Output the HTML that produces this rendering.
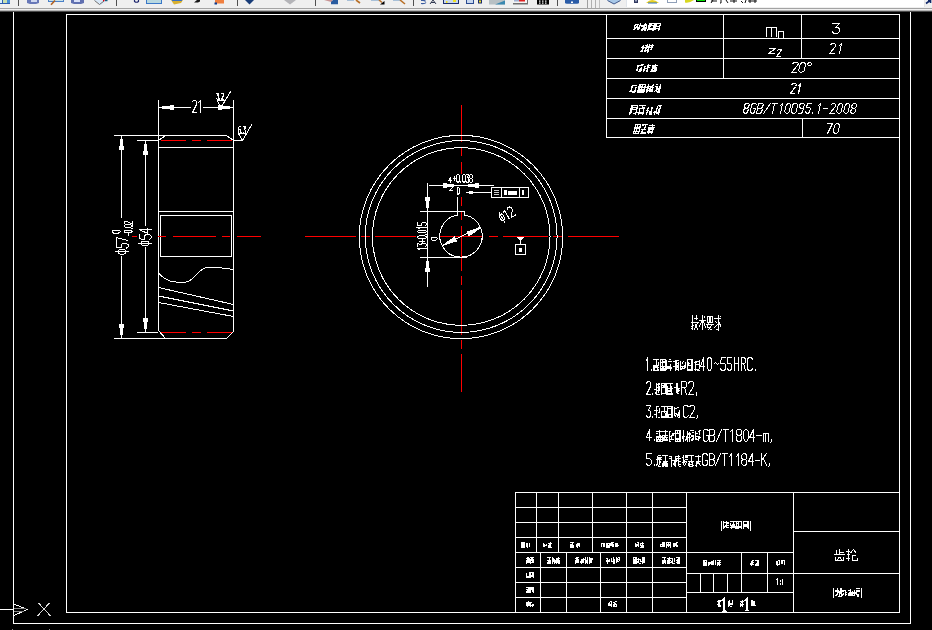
<!DOCTYPE html>
<html><head><meta charset="utf-8"><style>
html,body{margin:0;padding:0;background:#000;width:932px;height:630px;overflow:hidden}
svg{position:absolute;left:0;top:0;display:block}
</style></head><body>
<svg width="932" height="630" viewBox="0 0 932 630">
<rect x="0" y="0" width="932" height="630" fill="#000"/>
<g>
<rect x="0" y="0" width="932" height="8" fill="#efefef"/>
<rect x="626" y="0" width="298" height="7" fill="#fff"/>
<rect x="626" y="0" width="1" height="7" fill="#dfe4ea"/>
<rect x="924" y="0" width="1" height="7" fill="#e4e4e4"/>
<rect x="587" y="0" width="1" height="8" fill="#a0a0a0"/>
<rect x="591" y="0" width="1" height="8" fill="#b0b0b0"/><rect x="595" y="0" width="1" height="8" fill="#b0b0b0"/><rect x="599" y="0" width="1" height="8" fill="#c0c0c0"/>
<rect x="0" y="8" width="932" height="1" fill="#a3a3a3"/>
<rect x="0" y="9" width="932" height="1" fill="#f0f0f0"/>
<rect x="0" y="10" width="932" height="1" fill="#b5b5b5"/>
<rect x="0" y="11" width="932" height="1" fill="#4a4a4a"/>
<g fill="#505050">
<rect x="18" y="0" width="1" height="6"/><rect x="116" y="0" width="1" height="6"/>
<rect x="237" y="0" width="1" height="6"/><rect x="315" y="0" width="1" height="6"/>
<rect x="413" y="0" width="1" height="6"/><rect x="557" y="0" width="1" height="6"/>
</g>
<!-- icons -->
<rect x="0" y="0" width="10" height="4" fill="#2a5cb0"/><rect x="0" y="0" width="2" height="3" fill="#d8f0ff"/><rect x="3" y="0" width="4" height="3" fill="#c8e0b0"/><rect x="7" y="0" width="3" height="3" fill="#4890d8"/>
<path d="M27,0 H39 V3 L36,4 H30 L27,3 Z" fill="#6878b8"/><path d="M31,0 H37 V2 H31Z" fill="#d0d8f0"/>
<rect x="48" y="0" width="16" height="2" fill="#4a80c8"/><rect x="49" y="0" width="14" height="1" fill="#c8e0e8"/>
<path d="M55,0.5 L51,4.8" stroke="#b06020" stroke-width="1.6"/>
<path d="M71,0 H84 V3 L81,4 H74 L71,3 Z" fill="#6070b0"/><path d="M74,0 H80 V2 H74Z" fill="#d8e0f8"/>
<path d="M94,0 H108 L101,5 Z" fill="#d8e8f8"/><path d="M94.5,0.5 L99.5,4.5 L104,1" stroke="#707070" stroke-width="1" fill="none"/>
<rect x="103" y="0" width="1.5" height="1.2" fill="#e00010"/><rect x="105" y="0" width="2.5" height="1.2" fill="#106080"/>
<path d="M134.5,0 V1.5 Q136.5,3 138.5,1.5 V0" stroke="#202870" stroke-width="1.2" fill="none"/>
<rect x="146" y="0" width="16" height="4" fill="#3a78c8"/><rect x="147" y="0" width="14" height="3" fill="#b8d8e0"/>
<path d="M171,0 H183 L181,3 L174,4.5 Z" fill="#d8b030"/><rect x="172" y="0" width="10" height="1" fill="#3a70c0"/>
<path d="M194,2.5 L197,0 H200 V1.5 L198,2.5 Z" fill="#181818"/>
<rect x="215" y="0" width="9" height="3.5" fill="#f08040"/><rect x="214.5" y="2.5" width="2.5" height="2" fill="#0a3a90"/>
<path d="M245,0 H254 L249.5,4.5 Z" fill="#183c78"/>
<path d="M284,0 H296 L290,4.5 Z" fill="#b4b4b8"/>
<path d="M324,0 H332 L333,2.5 Z" fill="#c89494"/><path d="M333,0 H338 V4.2 H331 V2 Z" fill="#2a5ca0"/>
<rect x="347" y="0" width="7" height="1" fill="#a8c0d8"/><path d="M356,0 L360,3" stroke="#b87028" stroke-width="1.6"/>
<rect x="371" y="0" width="8" height="1" fill="#a8c0d8"/><path d="M379,0 L382,2.5" stroke="#b87028" stroke-width="1.6"/><path d="M380,4.5 L384.5,1 V4.5 Z" fill="#000"/>
<rect x="393" y="0" width="7" height="1" fill="#a8c0d8"/><path d="M400,0 L405,4" stroke="#b87028" stroke-width="1.6"/>
<path d="M421,0.5 Q425,0 425.5,1.5 M421,3.5 Q425,4 426,2.5" stroke="#3a5ca0" stroke-width="1.2" fill="none"/>
<path d="M430,4 L433,0 L436,4 M431,2.5 H435" stroke="#303850" stroke-width="1" fill="none"/>
<rect x="443" y="0" width="16" height="4" fill="#1c2c70"/><rect x="444" y="0" width="14" height="3" fill="#c8d8f0"/><rect x="453" y="0" width="3" height="2" fill="#f0e020"/><rect x="446" y="1" width="1.5" height="2" fill="#f0e020"/>
<rect x="466" y="0" width="8" height="4" fill="#2a4a90"/><rect x="467" y="0" width="6" height="3" fill="#c8d8f0"/><rect x="478" y="0" width="4" height="3.5" fill="#1c2c70"/><rect x="479" y="0.5" width="2" height="2" fill="#f0e020"/>
<path d="M489,0 H505 V4.5 H489 Z" fill="#b8c0c4"/><path d="M495,4.5 L505,0.5 V4.5 Z" fill="#3a88b0"/>
<rect x="513" y="0" width="15" height="4.5" fill="#707070"/><rect x="513" y="0" width="14" height="3" fill="#f4f4f4"/><rect x="519" y="0" width="6" height="1.5" fill="#e02020"/><rect x="514" y="0" width="5" height="1.5" fill="#a0b0d0"/>
<rect x="537" y="0" width="12" height="4.5" fill="#000"/><g fill="#fff"><rect x="539" y="0.5" width="1.5" height="1.2"/><rect x="542" y="0.5" width="1.5" height="1.2"/><rect x="545" y="0.5" width="1.5" height="1.2"/><rect x="539" y="2.5" width="1.5" height="1.2"/><rect x="542" y="2.5" width="1.5" height="1.2"/><rect x="545" y="2.5" width="1.5" height="1.2"/></g>
<path d="M565,0 H579 V2.5 Q579,3.8 577,3.8 H567 Q565,3.8 565,2.5 Z" fill="#2a5ca8"/><rect x="571" y="1.5" width="2" height="1.5" fill="#fff"/>
<path d="M607,0 H621 L614,4 Z" fill="#a8c8e8"/><path d="M607.5,0.5 L614,4 L620.5,0.5" stroke="#40588a" stroke-width="1" fill="none"/>
<rect x="634" y="0" width="4" height="3" fill="#303860"/><rect x="635" y="0" width="2" height="1.5" fill="#a0a8c0"/>
<path d="M646,3 Q652,-3 659,3 Z" fill="#e8d020"/><path d="M648,3 H657" stroke="#3070c0" stroke-width="1"/>
<rect x="667.5" y="-1" width="9" height="3.5" fill="none" stroke="#90a0b8" stroke-width="1"/>
<path d="M685,2.5 Q689,3.5 694,0 H685 Z" fill="#d8d820"/>
<rect x="696" y="0" width="10" height="2" fill="#000"/><rect x="697" y="0" width="8" height="1" fill="#00e000"/>
<path d="M711,1 H717 M713,0 L711,3 M721,0 V3 L720,3 M726,0 L728,3 M730,1 H737 M734,0 V3 M741,1 L743,3 M746,0 L745,3 M748,1 H757 M750,0 V3 M755,0 V3" stroke="#101010" stroke-width="1" fill="none"/>
<path d="M926,3.5 L930,0.5 M928,0.5 H930.5 V3" stroke="#10286a" stroke-width="1.6" fill="none"/>
</g>
<g shape-rendering="crispEdges">
<rect x="13" y="12" width="1" height="612" fill="#fff"/>
<rect x="13" y="623" width="898" height="1" fill="#fff"/>
<rect x="910" y="12" width="1" height="612" fill="#fff"/>
<rect x="0" y="609" width="13" height="1" fill="#fff"/>
<rect x="66" y="14" width="1" height="599" fill="#fff"/>
<rect x="66" y="14" width="834" height="1" fill="#fff"/>
<rect x="899" y="14" width="1" height="599" fill="#fff"/>
<rect x="66" y="612" width="834" height="1" fill="#fff"/>
<path d="M14,604 L27,609.5 L14,615.5" stroke="#fff" stroke-width="1" fill="none" />
<path d="M14,608.5 H26 M14,611.5 H24" stroke="#888" stroke-width="1" fill="none" />
<path d="M38.5,603 L50.5,616 M49.5,603 L37.5,616" stroke="#ddd" stroke-width="1" fill="none" />
<rect x="12" y="629" width="1" height="1" fill="#888"/><rect x="49" y="629" width="1" height="1" fill="#888"/>
<rect x="606" y="14" width="294" height="1" fill="#fff"/>
<rect x="606" y="38" width="294" height="1" fill="#fff"/>
<rect x="606" y="58" width="294" height="1" fill="#fff"/>
<rect x="606" y="78" width="294" height="1" fill="#fff"/>
<rect x="606" y="98" width="294" height="1" fill="#fff"/>
<rect x="606" y="118" width="294" height="1" fill="#fff"/>
<rect x="606" y="137" width="294" height="1" fill="#fff"/>
<rect x="606" y="14" width="1" height="124" fill="#fff"/>
<rect x="723" y="14" width="1" height="65" fill="#fff"/>
<rect x="801" y="14" width="1" height="45" fill="#fff"/>
<rect x="802" y="118" width="1" height="20" fill="#fff"/>
<path transform="translate(7.875,0) skewX(-14.036243467926479)" d="M633.5,24V30M633,27.5H636M636,27.5H639M636,28.5H638M637,29.5H639M638.5,23V29M638.5,24V29M633,24.5H637M636.5,25.5L634.5,28.5M642.5,24V31M640,26.5H643M640,25.5H643M640,25.5H643M640.5,30.5L642.5,27.5M643,24.5H645M643,25.5H646M643,28.5H646M644,30.5H646M643.5,23V29M644.5,27V31M643.5,27.5L641.5,30.5M644,29.5H646M645.5,26V29M647,23.5H653M647.5,23V31M652.5,24V31M648,29.5H652M648,25.5H652M648,28.5H652M648.5,24V30M652.5,28V31M649.5,23V27M647.5,27.5L647.5,30.5M653,23.5H659M653.5,23V31M658.5,24V31M654,26.5H658M654,28.5H658M654,26.5H658M654.5,24V30M653.5,25V29" stroke="#fff" stroke-width="1.3" fill="none"/>
<path transform="translate(13.25,0) skewX(-14.036243467926479)" d="M641.5,45V52M640,51.5H643M640,47.5H643M643,45.5H645M643,47.5H645M643,50.5H646M645.5,44V49M644.5,47V52M642.5,48.5L640.5,51.5M642,47.5H645M644,46.5H646M647.5,44V52M646,50.5H648M646,49.5H648M648,45.5H652M648,47.5H651M649,49.5H651M650.5,44V50M647.5,50V53M649,49.5H651" stroke="#fff" stroke-width="1.3" fill="none"/>
<path transform="translate(18.0,0) skewX(-14.036243467926479)" d="M636.5,65V71M636,66.5H638M636,65.5H638M636,66.5H638M636.5,71.5L637.5,68.5M639,64.5H642M638,65.5H641M638,71.5H641M639.5,68V72M640.5,67V71M643.5,66V71M643,68.5H646M643,68.5H646M646,65.5H649M646,67.5H649M646,71.5H648M646.5,64V69M647.5,68.5L646.5,71.5M643.5,67V72M650,65.5H656M653.5,64V67M651,66.5H655M651,70.5H656M651,70.5H656M650,71.5H655M651,68.5H656M651.5,67V72M655.5,67V72M653.5,66.5L650.5,71.5M655.5,69V72M654,69.5H656M654.5,67V70" stroke="#fff" stroke-width="1.3" fill="none"/>
<path transform="translate(23.25,0) skewX(-14.036243467926479)" d="M630.5,85V92M629,90.5H631M629.5,92.5L630.5,89.5M631,85.5H635M631,91.5H635M632,92.5H635M634.5,87V93M633,91.5H636M637,84.5H644M637.5,84V93M643.5,85V93M638,87.5H643M638,91.5H643M638,89.5H643M638,90.5H643M640.5,85V92M637,92.5H644M637,91.5H640M637,86.5H641M638.5,85V90M646.5,84V93M645,87.5H647M645,89.5H647M647,86.5H651M648,89.5H651M647,90.5H651M649.5,87V92M651.5,87V92M651.5,84.5L649.5,87.5M647,88.5H650M655.5,86V91M653,86.5H656M653.5,92.5L655.5,89.5M656,88.5H660M656,89.5H659M656,91.5H659M657,92.5H660M658.5,84V92M654,84.5H656" stroke="#fff" stroke-width="1.4" fill="none"/>
<path transform="translate(28.625,0) skewX(-14.036243467926479)" d="M629,105.5H636M629.5,105V115M635.5,106V115M630,109.5H635M630,107.5H635M630.5,106V114M633,113.5H636M630.5,107V110M637,105.5H644M640.5,105V109M638,108.5H643M637,112.5H643M638,113.5H644M638,112.5H643M638.5,109V115M642.5,109V115M642.5,107V111M640,107.5H642M646.5,107V115M645,110.5H648M645,110.5H648M649,107.5H651M648,111.5H651M649,112.5H652M649,113.5H652M649,114.5H652M650.5,107V114M646.5,108V111M650.5,111.5L648.5,114.5M649,114.5H652M655.5,106V113M653,112.5H656M653,111.5H656M653,112.5H656M653.5,114.5L655.5,111.5M656,105.5H660M657,106.5H659M657,110.5H659M656,112.5H659M657,113.5H659M658.5,106V115M657.5,109V114M656,113.5H659M654.5,111V115" stroke="#fff" stroke-width="1.4" fill="none"/>
<path transform="translate(33.375,0) skewX(-14.036243467926479)" d="M633,124.5H639M633.5,124V134M638.5,125V134M634,131.5H638M634,128.5H638M635.5,125V133M633,133.5H639M633.5,129V132M637.5,126V129M635.5,124V129M640,124.5H646M643.5,124V130M640,129.5H645M640,133.5H646M641,133.5H646M641,132.5H646M641.5,130V134M640,125.5H642M643.5,126V129M647,125.5H653M650.5,124V128M648,127.5H652M648,128.5H653M647,132.5H653M647,132.5H652M647,131.5H652M648.5,128V134M651.5,128V134M650.5,127.5L647.5,133.5M650.5,127.5L652.5,133.5M647,125.5H651M652.5,127V130M647.5,127V132" stroke="#fff" stroke-width="1.3" fill="none"/>
<path  d="M 766.50,36.50 L 766.50,27.50 L 776.50,27.50 L 776.50,36.50 M 771.50,27.50 L 771.50,36.50" stroke="#fff" stroke-width="1.0" fill="none" stroke-linejoin="miter" stroke-linecap="square"/>
<path  d="M 778.50,38.50 L 778.50,31.50 L 783.50,31.50 L 783.50,38.50" stroke="#fff" stroke-width="1.0" fill="none" stroke-linejoin="miter" stroke-linecap="square"/>
<path  d="M 832.50,23.50 L 839.50,23.50 L 835.50,27.50 L 837.50,27.50 L 839.50,28.50 L 839.50,31.50 L 837.50,33.50 L 833.50,33.50 L 832.50,31.50" stroke="#fff" stroke-width="1.0" fill="none" stroke-linejoin="miter" stroke-linecap="square"/>
<path  d="M 769.50,48.50 L 775.50,48.50 L 768.50,53.50 L 774.50,53.50" stroke="#fff" stroke-width="1.0" fill="none" stroke-linejoin="miter" stroke-linecap="square"/>
<path  d="M 777.50,50.50 L 778.50,49.50 L 780.50,49.50 L 781.50,49.50 L 780.50,51.50 L 776.50,56.50 L 780.50,56.50" stroke="#fff" stroke-width="1.0" fill="none" stroke-linejoin="miter" stroke-linecap="square"/>
<path  d="M 830.50,44.50 L 832.50,43.50 L 834.50,43.50 L 835.50,44.50 L 835.50,46.50 L 829.50,53.50 L 834.50,53.50 M 839.50,45.50 L 841.50,43.50 L 839.50,53.50" stroke="#fff" stroke-width="1.0" fill="none" stroke-linejoin="miter" stroke-linecap="square"/>
<path  d="M 792.50,63.50 L 794.50,62.50 L 797.50,62.50 L 798.50,63.50 L 797.50,65.50 L 791.50,72.50 L 796.50,72.50 M 802.50,62.50 L 803.50,62.50 L 805.50,63.50 L 804.50,70.50 L 801.50,72.50 L 800.50,72.50 L 798.50,70.50 L 800.50,63.50 Z M 809.50,62.50 L 810.50,62.50 L 811.50,63.50 L 811.50,64.50 L 810.50,65.50 L 808.50,65.50 L 807.50,64.50 L 807.50,63.50 Z" stroke="#fff" stroke-width="1.0" fill="none" stroke-linejoin="miter" stroke-linecap="square"/>
<path  d="M 791.50,84.50 L 793.50,83.50 L 795.50,83.50 L 796.50,84.50 L 795.50,86.50 L 790.50,93.50 L 794.50,93.50 M 798.50,85.50 L 800.50,83.50 L 798.50,93.50" stroke="#fff" stroke-width="1.3" fill="none" stroke-linejoin="miter" stroke-linecap="square"/>
<path  d="M 746.50,103.50 L 748.50,103.50 L 749.50,104.50 L 748.50,106.50 L 747.50,108.50 L 745.50,108.50 L 743.50,109.50 L 743.50,111.50 L 744.50,113.50 L 746.50,113.50 L 747.50,111.50 L 748.50,109.50 L 747.50,108.50 M 745.50,108.50 L 744.50,106.50 L 744.50,104.50 L 746.50,103.50 M 756.50,104.50 L 755.50,103.50 L 753.50,103.50 L 751.50,104.50 L 750.50,111.50 L 751.50,113.50 L 753.50,113.50 L 754.50,111.50 L 755.50,108.50 L 753.50,108.50 M 758.50,103.50 L 762.50,103.50 L 763.50,104.50 L 762.50,106.50 L 761.50,108.50 L 757.50,108.50 M 761.50,108.50 L 762.50,109.50 L 761.50,111.50 L 760.50,113.50 L 756.50,113.50 L 758.50,103.50 M 763.50,113.50 L 770.50,103.50 M 772.50,103.50 L 777.50,103.50 M 774.50,103.50 L 772.50,113.50 M 780.50,105.50 L 782.50,103.50 L 780.50,113.50 M 788.50,103.50 L 789.50,103.50 L 790.50,104.50 L 789.50,111.50 L 787.50,113.50 L 786.50,113.50 L 784.50,111.50 L 786.50,104.50 Z M 794.50,103.50 L 796.50,103.50 L 797.50,104.50 L 796.50,111.50 L 794.50,113.50 L 792.50,113.50 L 791.50,111.50 L 792.50,104.50 Z M 803.50,108.50 L 800.50,108.50 L 799.50,106.50 L 799.50,104.50 L 801.50,103.50 L 803.50,103.50 L 804.50,104.50 L 802.50,111.50 L 801.50,113.50 L 798.50,113.50 M 811.50,103.50 L 807.50,103.50 L 806.50,107.50 L 809.50,107.50 L 810.50,108.50 L 809.50,111.50 L 808.50,113.50 L 806.50,113.50 L 805.50,111.50 M 812.50,112.50 L 812.50,113.50 M 818.50,105.50 L 820.50,103.50 L 818.50,113.50 M 823.50,108.50 L 827.50,108.50 M 831.50,104.50 L 832.50,103.50 L 834.50,103.50 L 835.50,104.50 L 835.50,106.50 L 829.50,113.50 L 834.50,113.50 M 840.50,103.50 L 841.50,103.50 L 842.50,104.50 L 841.50,111.50 L 839.50,113.50 L 838.50,113.50 L 836.50,111.50 L 838.50,104.50 Z M 847.50,103.50 L 848.50,103.50 L 849.50,104.50 L 848.50,111.50 L 846.50,113.50 L 845.50,113.50 L 843.50,111.50 L 845.50,104.50 Z M 853.50,103.50 L 855.50,103.50 L 856.50,104.50 L 856.50,106.50 L 854.50,108.50 L 852.50,108.50 L 851.50,109.50 L 850.50,111.50 L 851.50,113.50 L 853.50,113.50 L 855.50,111.50 L 855.50,109.50 L 854.50,108.50 M 852.50,108.50 L 851.50,106.50 L 852.50,104.50 L 853.50,103.50" stroke="#fff" stroke-width="1.0" fill="none" stroke-linejoin="miter" stroke-linecap="square"/>
<path  d="M 827.50,123.50 L 832.50,123.50 L 827.50,133.50 M 836.50,123.50 L 838.50,123.50 L 839.50,125.50 L 838.50,131.50 L 836.50,133.50 L 834.50,133.50 L 833.50,131.50 L 834.50,125.50 Z" stroke="#fff" stroke-width="1.0" fill="none" stroke-linejoin="miter" stroke-linecap="square"/>
<rect x="158" y="100" width="1" height="231" fill="#fff"/>
<rect x="233" y="100" width="1" height="231" fill="#fff"/>
<rect x="158" y="107" width="33" height="1" fill="#fff"/>
<rect x="203" y="107" width="31" height="1" fill="#fff"/>
<rect x="162" y="106" width="8" height="3" fill="#fff"/><rect x="170" y="105" width="4" height="5" fill="#fff"/>
<rect x="222" y="106" width="8" height="3" fill="#fff"/><rect x="218" y="105" width="4" height="5" fill="#fff"/>
<rect x="114" y="135" width="113" height="1" fill="#fff"/>
<path d="M226.5,135.5 L233.5,140.5" stroke="#fff" stroke-width="1" fill="none" />
<path d="M158.5,140.5 L165.5,135.5" stroke="#fff" stroke-width="1" fill="none" />
<rect x="137" y="140" width="21" height="1" fill="#fff"/>
<rect x="158" y="147" width="76" height="1" fill="#fff"/>
<rect x="158" y="211" width="76" height="1" fill="#fff"/>
<path d="M160.5,215.5 H231.5 V256.5 H160.5 Z" stroke="#fff" stroke-width="1" fill="none" />
<rect x="114" y="338" width="113" height="1" fill="#fff"/>
<path d="M226.5,338.5 L233.5,331.5" stroke="#fff" stroke-width="1" fill="none" />
<path d="M158.5,330.5 L165.5,338.5" stroke="#fff" stroke-width="1" fill="none" />
<rect x="137" y="332" width="21" height="1" fill="#fff"/>
<rect x="161" y="140" width="25" height="1" fill="#ff0000"/>
<rect x="161" y="332" width="25" height="1" fill="#ff0000"/>
<rect x="192" y="140" width="9" height="1" fill="#ff0000"/>
<rect x="192" y="332" width="9" height="1" fill="#ff0000"/>
<rect x="207" y="140" width="25" height="1" fill="#ff0000"/>
<rect x="207" y="332" width="25" height="1" fill="#ff0000"/>
<rect x="132" y="236" width="5" height="1" fill="#ff0000"/>
<rect x="158" y="236" width="8" height="1" fill="#ff0000"/>
<rect x="173" y="236" width="43" height="1" fill="#ff0000"/>
<rect x="222" y="236" width="8" height="1" fill="#ff0000"/>
<rect x="237" y="236" width="24" height="1" fill="#ff0000"/>
<path d="M158.5,273 C163,278 168,282 176,282 L186,282 C193,282 199,268 207,267.5 L218,267.5 L233.5,269.5" stroke="#fff" stroke-width="1" fill="none" />
<path d="M158.5,287.5 L233.5,304.5 M158.5,296 L233.5,311 M158.5,302.5 L233.5,316.5" stroke="#fff" stroke-width="1" fill="none" />
<rect x="121" y="135" width="1" height="83" fill="#fff"/>
<rect x="121" y="256" width="1" height="83" fill="#fff"/>
<rect x="145" y="140" width="1" height="86" fill="#fff"/>
<rect x="145" y="247" width="1" height="86" fill="#fff"/>
<rect x="120" y="139" width="3" height="7" fill="#fff"/><rect x="119" y="146" width="5" height="4" fill="#fff"/>
<rect x="120" y="328" width="3" height="7" fill="#fff"/><rect x="119" y="324" width="5" height="4" fill="#fff"/>
<rect x="144" y="144" width="3" height="7" fill="#fff"/><rect x="143" y="151" width="5" height="4" fill="#fff"/>
<rect x="144" y="322" width="3" height="7" fill="#fff"/><rect x="143" y="318" width="5" height="4" fill="#fff"/>
<path  d="M 192.50,101.50 L 193.50,100.50 L 195.50,100.50 L 196.50,101.50 L 196.50,104.50 L 192.50,112.50 L 196.50,112.50 M 198.50,102.50 L 200.50,100.50 L 200.50,112.50" stroke="#fff" stroke-width="1.0" fill="none" stroke-linejoin="miter" stroke-linecap="square"/>
<path transform="translate(128,254) rotate(-90)" d="M 2.25,-12.75 L 2.25,0.75 M 1.12,-9.75 L 3.38,-9.75 L 4.50,-8.25 L 4.50,-3.75 L 3.38,-2.25 L 1.12,-2.25 L 0.00,-3.75 L 0.00,-8.25 Z M 10.50,-12.00 L 6.45,-12.00 L 6.00,-6.60 L 9.38,-6.60 L 10.50,-5.10 L 10.50,-1.50 L 9.38,0.00 L 7.12,0.00 L 6.00,-1.50 M 12.00,-12.00 L 16.50,-12.00 L 13.57,0.00" stroke="#fff" stroke-width="1.0" fill="none" stroke-linejoin="miter" stroke-linecap="square"/>
<path transform="translate(151,245.5) rotate(-90)" d="M 2.25,-12.75 L 2.25,0.75 M 1.12,-9.75 L 3.38,-9.75 L 4.50,-8.25 L 4.50,-3.75 L 3.38,-2.25 L 1.12,-2.25 L 0.00,-3.75 L 0.00,-8.25 Z M 10.70,-12.00 L 6.65,-12.00 L 6.20,-6.60 L 9.57,-6.60 L 10.70,-5.10 L 10.70,-1.50 L 9.57,0.00 L 7.33,0.00 L 6.20,-1.50 M 15.78,0.00 L 15.78,-12.00 L 12.40,-3.75 L 16.90,-3.75" stroke="#fff" stroke-width="1.0" fill="none" stroke-linejoin="miter" stroke-linecap="square"/>
<path transform="translate(132,236) rotate(-90)" d="M 0.19,-3.50 L 2.31,-3.50 M 4.34,-8.00 L 4.96,-8.00 L 5.90,-6.50 L 5.90,-1.50 L 4.96,0.00 L 4.34,0.00 L 3.40,-1.50 L 3.40,-6.50 Z M 7.11,-0.60 L 7.11,0.00 M 9.61,-8.00 L 10.23,-8.00 L 11.17,-6.50 L 11.17,-1.50 L 10.23,0.00 L 9.61,0.00 L 8.67,-1.50 L 8.67,-6.50 Z M 12.07,-6.80 L 12.70,-8.00 L 13.95,-8.00 L 14.57,-7.00 L 14.57,-5.00 L 12.07,0.00 L 14.57,0.00" stroke="#fff" stroke-width="1.0" fill="none" stroke-linejoin="miter" stroke-linecap="square"/>
<path transform="translate(120,233) rotate(-90)" d="M 1.12,-8.00 L 1.88,-8.00 L 3.00,-6.50 L 3.00,-1.50 L 1.88,0.00 L 1.12,0.00 L 0.00,-1.50 L 0.00,-6.50 Z" stroke="#fff" stroke-width="1.0" fill="none" stroke-linejoin="miter" stroke-linecap="square"/>
<path d="M217,100.5 H224.5 M217,100.5 L221,107.5 L231,91" stroke="#fff" stroke-width="1" fill="none" />
<path  d="M 216.50,93.50 L 218.50,93.50 L 217.50,95.50 L 218.50,95.50 L 218.50,96.50 L 218.50,98.50 L 218.50,99.50 L 217.50,99.50 L 216.50,98.50 M 219.50,98.50 L 219.50,99.50 M 221.50,93.50 L 221.50,93.50 L 222.50,93.50 L 223.50,93.50 L 223.50,95.50 L 221.50,99.50 L 223.50,99.50" stroke="#fff" stroke-width="1.3" fill="none" stroke-linejoin="miter" stroke-linecap="square"/>
<path d="M233.5,140.5 H242 M238.5,133.5 L242.5,140.5 L252,124 M238.5,133.5 H246.5" stroke="#fff" stroke-width="1" fill="none" />
<path  d="M 240.50,126.50 L 239.50,126.50 L 238.50,127.50 L 238.50,132.50 L 239.50,133.50 L 240.50,133.50 L 240.50,132.50 L 240.50,130.50 L 240.50,129.50 L 238.50,129.50 M 241.50,132.50 L 241.50,133.50 M 243.50,126.50 L 245.50,126.50 L 244.50,129.50 L 244.50,129.50 L 245.50,130.50 L 245.50,132.50 L 244.50,133.50 L 243.50,133.50 L 243.50,132.50" stroke="#fff" stroke-width="1.3" fill="none" stroke-linejoin="miter" stroke-linecap="square"/>
<rect x="305" y="236" width="51" height="1" fill="#ff0000"/>
<rect x="361" y="236" width="9" height="1" fill="#ff0000"/>
<rect x="375" y="236" width="41" height="1" fill="#ff0000"/>
<rect x="439" y="236" width="44" height="1" fill="#ff0000"/>
<rect x="489" y="236" width="9" height="1" fill="#ff0000"/>
<rect x="503" y="236" width="45" height="1" fill="#ff0000"/>
<rect x="553" y="236" width="9" height="1" fill="#ff0000"/>
<rect x="568" y="236" width="51" height="1" fill="#ff0000"/>
<rect x="461" y="105" width="1" height="37" fill="#ff0000"/>
<rect x="461" y="147" width="1" height="9" fill="#ff0000"/>
<rect x="461" y="162" width="1" height="12" fill="#ff0000"/>
<rect x="461" y="197" width="1" height="9" fill="#ff0000"/>
<rect x="461" y="212" width="1" height="8" fill="#ff0000"/>
<rect x="461" y="226" width="1" height="45" fill="#ff0000"/>
<rect x="461" y="276" width="1" height="9" fill="#ff0000"/>
<rect x="461" y="290" width="1" height="45" fill="#ff0000"/>
<rect x="461" y="340" width="1" height="9" fill="#ff0000"/>
<rect x="461" y="354" width="1" height="38" fill="#ff0000"/>
<circle cx="461.0" cy="237.0" r="101.7" stroke="#fff" stroke-width="1" fill="none"/>
<circle cx="461.2" cy="236.5" r="95.9" stroke="#fff" stroke-width="1" fill="none"/>
<circle cx="461.25" cy="236.5" r="88.8" stroke="#fff" stroke-width="1" fill="none"/>
<path d="M457.5,211.5 V215 A21.2,21.2 0 1 0 464.5,215 V211.5" stroke="#fff" stroke-width="1" fill="none" />
<rect x="420" y="211" width="45" height="1" fill="#fff"/>
<rect x="420" y="257" width="47" height="1" fill="#fff"/>
<rect x="427" y="183" width="1" height="104" fill="#fff"/>
<rect x="426" y="201" width="3" height="7" fill="#fff"/><rect x="425" y="197" width="5" height="4" fill="#fff"/>
<rect x="426" y="261" width="3" height="7" fill="#fff"/><rect x="425" y="268" width="5" height="4" fill="#fff"/>
<rect x="457" y="197" width="1" height="18" fill="#fff"/>
<rect x="429" y="185" width="65" height="1" fill="#fff"/>
<rect x="447" y="184" width="7" height="3" fill="#fff"/><rect x="443" y="183" width="4" height="5" fill="#fff"/>
<rect x="468" y="184" width="7" height="3" fill="#fff"/><rect x="475" y="183" width="4" height="5" fill="#fff"/>
<path  d="M 453.50,178.50 L 455.50,178.50 M 454.50,176.50 L 454.50,180.50 M 457.50,174.50 L 458.50,174.50 L 459.50,175.50 L 459.50,180.50 L 458.50,182.50 L 457.50,182.50 L 456.50,180.50 L 456.50,175.50 Z M 460.50,181.50 L 460.50,182.50 M 463.50,174.50 L 464.50,174.50 L 465.50,175.50 L 465.50,180.50 L 464.50,182.50 L 463.50,182.50 L 462.50,180.50 L 462.50,175.50 Z M 466.50,174.50 L 468.50,174.50 L 467.50,177.50 L 468.50,177.50 L 468.50,178.50 L 468.50,181.50 L 468.50,182.50 L 466.50,182.50 L 466.50,181.50 M 470.50,174.50 L 471.50,174.50 L 472.50,175.50 L 472.50,177.50 L 471.50,178.50 L 470.50,178.50 L 469.50,179.50 L 469.50,181.50 L 470.50,182.50 L 471.50,182.50 L 472.50,181.50 L 472.50,179.50 L 471.50,178.50 M 470.50,178.50 L 469.50,177.50 L 469.50,175.50 L 470.50,174.50" stroke="#fff" stroke-width="1.0" fill="none" stroke-linejoin="miter" stroke-linecap="square"/>
<path  d="M 450.50,182.50 L 450.50,177.50 L 448.50,180.50 L 451.50,180.50" stroke="#fff" stroke-width="1.0" fill="none" stroke-linejoin="miter" stroke-linecap="square"/>
<path  d="M 449.50,186.50 L 449.50,186.50 L 451.50,186.50 L 452.50,186.50 L 452.50,187.50 L 449.50,190.50 L 452.50,190.50" stroke="#fff" stroke-width="1.0" fill="none" stroke-linejoin="miter" stroke-linecap="square"/>
<path  d="M 457.50,187.50 L 458.50,187.50 L 459.50,188.50 L 459.50,192.50 L 458.50,194.50 L 457.50,194.50 L 457.50,192.50 L 457.50,188.50 Z" stroke="#fff" stroke-width="1.0" fill="none" stroke-linejoin="miter" stroke-linecap="square"/>
<rect x="466" y="192" width="26" height="1" fill="#fff"/>
<rect x="469" y="191" width="4" height="1" fill="#fff"/>
<rect x="469" y="193" width="4" height="1" fill="#fff"/>
<path d="M443,245.5 L480.5,227" stroke="#fff" stroke-width="1" fill="none" />
<polygon points="481.1772,227.8584 468.8004,236.65380000000002 466.3196,231.6362 480.8228,227.1416" fill="#fff"/>
<polygon points="442.3228,245.1416 454.6996,236.34619999999998 457.1804,241.3638 442.6772,245.8584" fill="#fff"/>
<path transform="translate(426.5,250) rotate(-90)" d="M 0.56,-7.20 L 1.61,-9.00 L 1.61,0.00 M 3.75,-9.00 L 6.55,-9.00 L 5.15,-5.17 L 5.85,-5.17 L 6.55,-3.94 L 6.55,-1.12 L 5.85,0.00 L 4.45,0.00 L 3.75,-1.12 M 7.50,-4.50 L 10.30,-4.50 M 8.90,-6.75 L 8.90,-2.25 M 12.30,-9.00 L 13.00,-9.00 L 14.05,-7.31 L 14.05,-1.69 L 13.00,0.00 L 12.30,0.00 L 11.25,-1.69 L 11.25,-7.31 Z M 15.35,-0.67 L 15.35,0.00 M 18.11,-9.00 L 18.81,-9.00 L 19.86,-7.31 L 19.86,-1.69 L 18.81,0.00 L 18.11,0.00 L 17.06,-1.69 L 17.06,-7.31 Z M 21.37,-7.20 L 22.42,-9.00 L 22.42,0.00 M 27.36,-9.00 L 24.84,-9.00 L 24.56,-4.95 L 26.66,-4.95 L 27.36,-3.83 L 27.36,-1.12 L 26.66,0.00 L 25.26,0.00 L 24.56,-1.12" stroke="#fff" stroke-width="1.0" fill="none" stroke-linejoin="miter" stroke-linecap="square"/>
<path transform="translate(437,240) rotate(-90)" d="M 1.12,-6.00 L 1.88,-6.00 L 3.00,-4.88 L 3.00,-1.12 L 1.88,0.00 L 1.12,0.00 L 0.00,-1.12 L 0.00,-4.88 Z" stroke="#fff" stroke-width="1.0" fill="none" stroke-linejoin="miter" stroke-linecap="square"/>
<path transform="translate(502.5,222.5) rotate(-30)" d="M 2.10,-10.62 L 2.10,0.62 M 1.05,-8.12 L 3.15,-8.12 L 4.20,-6.88 L 4.20,-3.12 L 3.15,-1.88 L 1.05,-1.88 L 0.00,-3.12 L 0.00,-6.88 Z M 6.14,-8.00 L 7.71,-10.00 L 7.71,0.00 M 10.60,-8.50 L 11.65,-10.00 L 13.75,-10.00 L 14.80,-8.75 L 14.80,-6.25 L 10.60,0.00 L 14.80,0.00" stroke="#fff" stroke-width="1.0" fill="none" stroke-linejoin="miter" stroke-linecap="square"/>
<path d="M491.5,187.5 H528.5 V197.5 H491.5 Z M501.5,187.5 V197.5 M519.5,187.5 V197.5" stroke="#fff" stroke-width="1" fill="none" />
<path d="M494,190.5 H499 M494,192.5 H499 M494,194.5 H499" stroke="#ccc" stroke-width="1" fill="none" />
<rect x="504" y="190" width="3" height="5" fill="#fff"/><rect x="508" y="191" width="9" height="4" fill="#fff"/><rect x="522" y="190" width="2" height="5" fill="#fff"/>
<polygon points="516.5,236.5 524.5,236.5 520.5,241" fill="#fff"/>
<rect x="520" y="241" width="1" height="4" fill="#fff"/>
<path d="M515.5,244.5 H525.5 V254.5 H515.5 Z" stroke="#fff" stroke-width="1" fill="none" />
<rect x="519" y="248" width="3" height="4" fill="#fff"/>
<path d="M691,322.5 H695 M692.5,315 V329 L691,328 M691,327 L694,325 M696.5,315 V320 M694,318.5 H698 M694,322.5 H698 L694,330 M695,324 L698,330" stroke="#fff" stroke-width="1" fill="none" />
<path d="M699,320.5 H706 M702.5,315 V330 M702,321 L699,327 M703,321 L706,328 M704,316.5 L705,317.5" stroke="#fff" stroke-width="1" fill="none" />
<path d="M707,316.5 H713 M707.5,317 V322 H712.5 V317 M709.5,316 V322 M710.5,316 V322 M706,324.5 H714 M709,323 L707,327 L712,330 M712,325 L708,330" stroke="#fff" stroke-width="1" fill="none" />
<path d="M714,318.5 H721 M718.5,315 V330 L716,329 M715,321 L717,323 M714,328 L718,324 M719,322 L721,327 M720,316 L721,317" stroke="#fff" stroke-width="1" fill="none" />
<path  d="M 646.50,360.50 L 647.50,357.50 L 647.50,370.50" stroke="#fff" stroke-width="1.0" fill="none" stroke-linejoin="miter" stroke-linecap="square"/>
<path  d="M 651.50,369.50 L 651.50,370.50" stroke="#fff" stroke-width="1.0" fill="none" stroke-linejoin="miter" stroke-linecap="square"/>
<path  d="M653,359.5H659M656.5,359V366M653,365.5H658M653,370.5H658M653,370.5H659M654,367.5H659M653,366.5H658M653.5,366V371M657.5,366V371M656.5,365.5L653.5,370.5M656.5,365.5L658.5,370.5M658.5,362V366M660,359.5H666M660.5,359V371M665.5,360V371M661,366.5H665M661,368.5H665M661,362.5H665M661,369.5H665M662.5,360V370M660,370.5H666M663,361.5H666M663.5,367V370M666.5,360V370M666,367.5H668M666.5,370.5L667.5,367.5M669,359.5H671M668,361.5H672M668,367.5H672M668,368.5H672M670.5,364V371M666,367.5H670M667,366.5H670M667,368.5H669M675.5,360V371M673,366.5H676M673,361.5H676M676,360.5H679M676,366.5H679M676,369.5H679M676.5,361V369M678.5,362V371M677.5,365.5L676.5,370.5M676,363.5H679M675.5,361V364M680.5,361V370M680,368.5H683M680,366.5H683M680,366.5H683M680.5,370.5L682.5,367.5M683,366.5H686M683,368.5H685M685.5,362V368M684.5,365V368M683.5,361.5L681.5,364.5M680,369.5H682M687,359.5H693M687.5,359V371M692.5,360V371M688,369.5H692M688,365.5H692M691.5,360V370M687,370.5H693M688.5,363.5L687.5,366.5M688,363.5H690M688.5,362.5L687.5,365.5M695.5,361V371M694,362.5H696M696,361.5H699M696,364.5H700M697,370.5H700M699.5,360V369M694,369.5H696M695,369.5H699M696.5,362.5L694.5,365.5" stroke="#fff" stroke-width="1.0" fill="none"/>
<path  d="M 703.50,370.50 L 703.50,357.50 L 700.50,366.50 L 704.50,366.50 M 708.50,357.50 L 710.50,357.50 L 711.50,359.50 L 711.50,367.50 L 710.50,370.50 L 708.50,370.50 L 707.50,367.50 L 707.50,359.50 Z M 714.50,363.50 L 715.50,362.50 L 717.50,364.50 L 718.50,363.50 M 725.50,357.50 L 721.50,357.50 L 720.50,363.50 L 724.50,363.50 L 725.50,364.50 L 725.50,368.50 L 724.50,370.50 L 721.50,370.50 L 720.50,368.50 M 731.50,357.50 L 727.50,357.50 L 727.50,363.50 L 730.50,363.50 L 731.50,364.50 L 731.50,368.50 L 730.50,370.50 L 728.50,370.50 L 727.50,368.50 M 734.50,357.50 L 734.50,370.50 M 738.50,357.50 L 738.50,370.50 M 734.50,363.50 L 738.50,363.50 M 741.50,370.50 L 741.50,357.50 L 744.50,357.50 L 745.50,359.50 L 745.50,362.50 L 744.50,363.50 L 741.50,363.50 M 743.50,363.50 L 745.50,370.50 M 752.50,359.50 L 751.50,357.50 L 748.50,357.50 L 747.50,359.50 L 747.50,368.50 L 748.50,370.50 L 751.50,370.50 L 752.50,368.50 M 755.50,369.50 L 755.50,370.50" stroke="#fff" stroke-width="1.0" fill="none" stroke-linejoin="miter" stroke-linecap="square"/>
<path  d="M 646.50,383.50 L 647.50,381.50 L 649.50,381.50 L 650.50,382.50 L 650.50,386.50 L 646.50,394.50 L 650.50,394.50 M 652.50,393.50 L 652.50,394.50" stroke="#fff" stroke-width="1.0" fill="none" stroke-linejoin="miter" stroke-linecap="square"/>
<path  d="M656.5,383V395M654,389.5H657M654.5,394.5L656.5,391.5M658,383.5H660M657,387.5H660M657,394.5H660M658.5,385V393M657,384.5H660M659.5,386V391M657,390.5H659M661,383.5H667M661.5,383V395M666.5,384V395M662,385.5H666M662,393.5H666M662,387.5H666M665.5,384V394M664.5,384.5L662.5,387.5M663,387.5H667M665.5,384.5L663.5,387.5M667,383.5H673M670.5,383V389M667,388.5H673M667,390.5H672M668,393.5H672M668,394.5H673M668,391.5H672M667.5,389V395M670.5,388.5L672.5,394.5M667.5,385.5L667.5,388.5M671.5,386V391M670.5,384V387M676.5,383V393M674,387.5H677M677,388.5H680M678,390.5H680M677,393.5H679M677.5,383V392M678.5,389.5L677.5,394.5M676,392.5H678" stroke="#fff" stroke-width="1.0" fill="none"/>
<path  d="M 681.50,394.50 L 681.50,381.50 L 685.50,381.50 L 686.50,382.50 L 686.50,386.50 L 685.50,387.50 L 681.50,387.50 M 684.50,387.50 L 686.50,394.50 M 688.50,383.50 L 689.50,381.50 L 692.50,381.50 L 693.50,382.50 L 693.50,386.50 L 688.50,394.50 L 693.50,394.50 M 696.50,392.50 L 696.50,394.50 L 696.50,395.50" stroke="#fff" stroke-width="1.0" fill="none" stroke-linejoin="miter" stroke-linecap="square"/>
<path  d="M 646.50,405.50 L 650.50,405.50 L 648.50,410.50 L 649.50,410.50 L 650.50,411.50 L 650.50,415.50 L 649.50,417.50 L 647.50,417.50 L 646.50,415.50 M 652.50,416.50 L 652.50,417.50" stroke="#fff" stroke-width="1.0" fill="none" stroke-linejoin="miter" stroke-linecap="square"/>
<path  d="M656.5,406V418M654,410.5H657M654,414.5H657M657,406.5H659M658,412.5H660M658,417.5H660M659.5,408V413M656.5,408V412M656,410.5H658M661,406.5H667M664.5,406V412M661,411.5H667M662,417.5H666M662,416.5H667M661.5,412V418M666.5,412V418M664.5,411.5L666.5,417.5M663,416.5H665M662,406.5H664M661,406.5H663M667,406.5H673M667.5,406V418M672.5,407V418M668,408.5H672M668,414.5H672M668,414.5H672M671.5,407V417M667,417.5H673M669.5,414.5L667.5,417.5M671,416.5H673M671.5,409V412M674.5,407V416M674,413.5H677M674,413.5H677M674,408.5H677M674.5,417.5L676.5,414.5M677,407.5H679M678,414.5H680M677,415.5H679M678,417.5H680M679.5,410V417M679.5,410V414M678.5,412.5L677.5,417.5M677.5,414V417" stroke="#fff" stroke-width="1.0" fill="none"/>
<path  d="M 688.50,406.50 L 686.50,405.50 L 684.50,405.50 L 683.50,406.50 L 683.50,415.50 L 684.50,417.50 L 686.50,417.50 L 688.50,415.50 M 689.50,406.50 L 691.50,405.50 L 693.50,405.50 L 694.50,406.50 L 694.50,409.50 L 689.50,417.50 L 694.50,417.50 M 697.50,415.50 L 697.50,417.50 L 696.50,418.50" stroke="#fff" stroke-width="1.0" fill="none" stroke-linejoin="miter" stroke-linecap="square"/>
<path  d="M 649.50,440.50 L 649.50,429.50 L 646.50,437.50 L 651.50,437.50 M 654.50,439.50 L 654.50,440.50" stroke="#fff" stroke-width="1.0" fill="none" stroke-linejoin="miter" stroke-linecap="square"/>
<path  d="M656,431.5H662M659.5,430V437M656,436.5H662M656,439.5H661M656,439.5H662M657,437.5H662M657,441.5H662M656.5,437V442M660.5,437V442M659.5,436.5L656.5,441.5M656,433.5H658M660.5,435.5L658.5,438.5M659,440.5H661M662,431.5H668M665.5,430V436M662,435.5H668M663,440.5H667M663,439.5H668M662,437.5H668M662.5,436V442M665.5,435.5L662.5,441.5M665.5,435.5L667.5,441.5M662.5,437V440M669.5,432V442M669,436.5H671M669,431.5H671M669,439.5H671M672,433.5H675M672,434.5H674M672,435.5H674M671.5,435V439M669,441.5H671M671,435.5H674M670,439.5H674M675,430.5H681M675.5,430V442M680.5,431V442M676,433.5H680M676,438.5H680M676,439.5H680M676,433.5H680M679.5,431V441M675,441.5H681M677.5,431V434M677.5,438V441M679.5,438V442M683.5,430V442M682,436.5H685M686,439.5H688M687.5,431V442M686.5,436.5L685.5,441.5M682.5,435.5L682.5,438.5M689.5,432V442M688,433.5H691M688,437.5H691M688,434.5H691M692,432.5H694M691,435.5H694M692,438.5H694M691,439.5H694M691,440.5H693M693.5,435V438M690,430.5H694M691,436.5H694M695.5,431V440M695,436.5H698M695,433.5H698M695,439.5H698M699,430.5H701M698,431.5H700M698,437.5H701M698.5,436V440M699.5,436.5L698.5,441.5M695,438.5H697M699.5,432V435" stroke="#fff" stroke-width="1.0" fill="none"/>
<path  d="M 708.50,430.50 L 706.50,429.50 L 704.50,429.50 L 703.50,430.50 L 703.50,439.50 L 704.50,441.50 L 706.50,441.50 L 708.50,439.50 L 708.50,435.50 L 706.50,435.50 M 709.50,429.50 L 713.50,429.50 L 714.50,430.50 L 714.50,433.50 L 713.50,435.50 L 709.50,435.50 M 713.50,435.50 L 714.50,436.50 L 714.50,439.50 L 713.50,441.50 L 709.50,441.50 L 709.50,429.50 M 716.50,441.50 L 721.50,429.50 M 723.50,429.50 L 728.50,429.50 M 725.50,429.50 L 725.50,441.50 M 730.50,431.50 L 732.50,429.50 L 732.50,441.50 M 737.50,429.50 L 740.50,429.50 L 741.50,430.50 L 741.50,433.50 L 740.50,435.50 L 737.50,435.50 L 736.50,436.50 L 736.50,439.50 L 737.50,441.50 L 740.50,441.50 L 741.50,439.50 L 741.50,436.50 L 740.50,435.50 M 737.50,435.50 L 736.50,433.50 L 736.50,430.50 L 737.50,429.50 M 745.50,429.50 L 746.50,429.50 L 748.50,431.50 L 748.50,438.50 L 746.50,441.50 L 745.50,441.50 L 743.50,438.50 L 743.50,431.50 Z M 753.50,441.50 L 753.50,429.50 L 749.50,437.50 L 754.50,437.50 M 756.50,435.50 L 761.50,435.50 M 763.50,441.50 L 763.50,433.50 L 768.50,433.50 L 768.50,441.50 M 765.50,433.50 L 765.50,441.50 M 771.50,439.50 L 771.50,441.50 L 770.50,442.50" stroke="#fff" stroke-width="1.0" fill="none" stroke-linejoin="miter" stroke-linecap="square"/>
<path  d="M 651.50,453.50 L 646.50,453.50 L 646.50,458.50 L 649.50,458.50 L 651.50,460.50 L 651.50,463.50 L 649.50,465.50 L 647.50,465.50 L 646.50,463.50 M 654.50,464.50 L 654.50,465.50" stroke="#fff" stroke-width="1.0" fill="none" stroke-linejoin="miter" stroke-linecap="square"/>
<path  d="M657.5,456V465M656,464.5H658M656,459.5H658M656.5,466.5L657.5,463.5M658,455.5H661M658,457.5H662M658,458.5H661M658,459.5H662M658,466.5H661M659.5,460V465M660.5,461.5L658.5,466.5M657,457.5H659M658.5,458.5L656.5,461.5M662,455.5H668M665.5,455V462M663,461.5H668M663,464.5H668M663,465.5H668M662,463.5H668M663,462.5H667M663.5,462V467M665.5,461.5L667.5,466.5M665,466.5H668M665,455.5H668M662.5,463V467M671.5,456V467M669,458.5H672M669,456.5H672M672,460.5H675M673,463.5H675M674.5,461V466M674.5,461V466M673,464.5H675M675.5,456V467M675,458.5H678M675,460.5H678M678,456.5H680M678,461.5H681M679,464.5H681M679,466.5H681M678.5,455V464M678.5,455V466M675,456.5H679M676.5,459V462M677,458.5H681M683.5,455V465M682,457.5H684M682,462.5H684M685,455.5H688M685,456.5H688M685,457.5H688M685,459.5H688M684.5,460V463M686.5,461.5L684.5,466.5M683,461.5H687M688,455.5H694M691.5,455V462M688,461.5H693M689,464.5H693M689,466.5H693M688,464.5H693M689.5,462V467M692.5,462V467M691.5,461.5L693.5,466.5M688.5,463V466M690,466.5H693M691,461.5H694M695,456.5H701M698.5,455V462M696,461.5H701M696,463.5H700M696,463.5H700M696.5,462V467M698.5,461.5L695.5,466.5M698.5,461.5L700.5,466.5M698.5,460.5L696.5,463.5" stroke="#fff" stroke-width="1.0" fill="none"/>
<path  d="M 707.50,455.50 L 706.50,453.50 L 703.50,453.50 L 702.50,455.50 L 702.50,463.50 L 703.50,465.50 L 706.50,465.50 L 707.50,463.50 L 707.50,460.50 L 705.50,460.50 M 709.50,453.50 L 712.50,453.50 L 714.50,455.50 L 714.50,458.50 L 712.50,459.50 L 709.50,459.50 M 712.50,459.50 L 714.50,460.50 L 714.50,463.50 L 712.50,465.50 L 709.50,465.50 L 709.50,453.50 M 715.50,465.50 L 720.50,453.50 M 722.50,453.50 L 727.50,453.50 M 724.50,453.50 L 724.50,465.50 M 729.50,456.50 L 731.50,453.50 L 731.50,465.50 M 736.50,456.50 L 738.50,453.50 L 738.50,465.50 M 743.50,453.50 L 745.50,453.50 L 746.50,455.50 L 746.50,458.50 L 745.50,459.50 L 743.50,459.50 L 741.50,460.50 L 741.50,463.50 L 743.50,465.50 L 745.50,465.50 L 746.50,463.50 L 746.50,460.50 L 745.50,459.50 M 743.50,459.50 L 741.50,458.50 L 741.50,455.50 L 743.50,453.50 M 752.50,465.50 L 752.50,453.50 L 748.50,461.50 L 753.50,461.50 M 755.50,460.50 L 759.50,460.50 M 761.50,453.50 L 761.50,465.50 M 766.50,453.50 L 761.50,460.50 M 763.50,458.50 L 766.50,465.50 M 769.50,463.50 L 769.50,465.50 L 768.50,466.50" stroke="#fff" stroke-width="1.0" fill="none" stroke-linejoin="miter" stroke-linecap="square"/>
<rect x="515" y="492" width="172" height="1" fill="#fff"/>
<rect x="515" y="507" width="172" height="1" fill="#fff"/>
<rect x="515" y="522" width="172" height="1" fill="#fff"/>
<rect x="515" y="537" width="172" height="1" fill="#fff"/>
<rect x="515" y="552" width="172" height="1" fill="#fff"/>
<rect x="515" y="567" width="172" height="1" fill="#fff"/>
<rect x="515" y="582" width="172" height="1" fill="#fff"/>
<rect x="515" y="597" width="172" height="1" fill="#fff"/>
<rect x="515" y="612" width="172" height="1" fill="#fff"/>
<rect x="515" y="492" width="1" height="61" fill="#fff"/>
<rect x="536" y="492" width="1" height="61" fill="#fff"/>
<rect x="558" y="492" width="1" height="61" fill="#fff"/>
<rect x="592" y="492" width="1" height="61" fill="#fff"/>
<rect x="626" y="492" width="1" height="61" fill="#fff"/>
<rect x="652" y="492" width="1" height="61" fill="#fff"/>
<rect x="515" y="552" width="1" height="61" fill="#fff"/>
<rect x="540" y="552" width="1" height="61" fill="#fff"/>
<rect x="566" y="552" width="1" height="61" fill="#fff"/>
<rect x="600" y="552" width="1" height="61" fill="#fff"/>
<rect x="626" y="552" width="1" height="61" fill="#fff"/>
<rect x="652" y="552" width="1" height="61" fill="#fff"/>
<rect x="686" y="492" width="1" height="121" fill="#fff"/>
<rect x="686" y="492" width="214" height="1" fill="#fff"/>
<rect x="793" y="492" width="1" height="121" fill="#fff"/>
<rect x="793" y="531" width="107" height="1" fill="#fff"/>
<rect x="686" y="573" width="214" height="1" fill="#fff"/>
<rect x="686" y="552" width="108" height="1" fill="#fff"/>
<rect x="686" y="592" width="108" height="1" fill="#fff"/>
<rect x="741" y="552" width="1" height="41" fill="#fff"/>
<rect x="767" y="552" width="1" height="41" fill="#fff"/>
<rect x="700" y="573" width="1" height="20" fill="#fff"/>
<rect x="713" y="573" width="1" height="20" fill="#fff"/>
<rect x="727" y="573" width="1" height="20" fill="#fff"/>
<path  d="M521,542.5H525M521.5,542V548M524.5,543V548M522,544.5H524M522,546.5H524M522.5,543V547M521,547.5H525M523.5,542V547M523.5,544V548M524.5,543V546M527.5,544V548M526,543.5H528M526,545.5H528M529.5,543V547M526.5,543.5L526.5,546.5" stroke="#fff" stroke-width="1.6" fill="none"/>
<path  d="M543.5,543V547M543,544.5H545M543,546.5H545M545.5,545V546M546.5,544V546M543,544.5H545M544.5,544V547M548,543.5H552M550.5,542V547M548,546.5H551M548,547.5H552M548,547.5H551M549,547.5H551M548,547.5H552M548.5,547V548M550.5,547V548M550.5,546.5L548.5,547.5M550.5,542V547M550.5,543.5L548.5,546.5" stroke="#fff" stroke-width="1.6" fill="none"/>
<path  d="M570,542.5H574M572.5,542V546M570,545.5H574M570,546.5H574M571,547.5H574M570.5,546V548M572.5,546V548M572.5,545.5L573.5,547.5M570,544.5H573M577.5,543V548M576,544.5H578M576,546.5H578M576.5,547.5L577.5,544.5M578,543.5H580M578,544.5H580M579.5,545V547M576,545.5H579" stroke="#fff" stroke-width="1.6" fill="none"/>
<path  d="M601.5,544V547M601,543.5H603M603,544.5H605M603,546.5H605M603.5,544V546M603.5,543V547M604.5,543V546M603,543.5H605M606.5,543V548M606,543.5H608M606,546.5H608M606,545.5H608M606.5,547.5L607.5,544.5M608,543.5H610M609.5,544V546M608.5,545V548M609.5,545.5L608.5,547.5M606,547.5H610M611.5,542V546M610,544.5H612M612,542.5H614M612,545.5H614M612,546.5H614M612.5,543V547M612,544.5H614M610.5,542.5L610.5,545.5M615.5,544V547M615,546.5H617M615,543.5H617M617,545.5H619M617.5,543V547M616.5,543.5L615.5,546.5" stroke="#fff" stroke-width="1.6" fill="none"/>
<path  d="M635.5,543V546M635,544.5H637M635,546.5H637M635.5,547.5L636.5,544.5M637,542.5H639M637.5,544V546M638.5,543V547M637,544.5H639M640,543.5H644M642.5,542V547M641,546.5H643M640,547.5H644M641,547.5H644M640,547.5H644M641,547.5H644M640.5,547V548M643.5,547V548M642.5,546.5L640.5,547.5M642.5,546.5L643.5,547.5M640.5,542.5L640.5,545.5M640,545.5H644" stroke="#fff" stroke-width="1.6" fill="none"/>
<path  d="M660.5,544V546M660,544.5H662M660,546.5H662M660,544.5H662M662,542.5H665M662,544.5H665M662,546.5H665M664.5,545V546M662.5,542V547M663.5,545.5L662.5,547.5M662,546.5H664M663.5,542V546M663,543.5H665M666,542.5H671M666.5,542V548M670.5,543V548M667,544.5H670M667,545.5H670M667,545.5H670M668.5,543V547M666,545.5H670M673.5,544V547M673,543.5H676M673,543.5H676M673.5,547.5L675.5,544.5M676,542.5H678M676.5,544V546M677.5,545.5L676.5,547.5M676.5,542.5L674.5,545.5M674,545.5H678" stroke="#fff" stroke-width="1.6" fill="none"/>
<path  d="M526,558.5H530M528.5,557V560M527,559.5H530M526,562.5H530M527,560.5H529M527,562.5H529M526.5,560V564M528.5,559.5L526.5,563.5M528.5,559.5L529.5,563.5M527,557.5H529M527.5,559.5L526.5,562.5M527.5,559.5L526.5,562.5M530,557.5H534M532.5,557V560M530,559.5H534M531,560.5H533M530,562.5H533M530.5,560V564M532.5,559.5L533.5,563.5M530,557.5H534M532,557.5H534M531.5,558V561" stroke="#fff" stroke-width="1.6" fill="none"/>
<path  d="M547,557.5H551M549.5,557V561M547,560.5H551M547,563.5H551M548,562.5H550M548,562.5H551M547,562.5H551M548.5,561V564M550.5,561V564M549.5,560.5L547.5,563.5M549.5,561V564M552.5,557V564M552,558.5H554M552,559.5H554M552,558.5H554M554.5,559V563M554.5,559V564M555.5,560.5L554.5,563.5M554.5,559.5L552.5,562.5M554.5,559.5L552.5,562.5M552.5,560V564M556,558.5H560M558.5,557V560M556,559.5H559M556,560.5H559M556,560.5H560M557,560.5H559M556,562.5H559M556.5,560V564M559.5,560V564M558.5,559.5L556.5,563.5M557,560.5H559M556,562.5H560M558.5,561V564" stroke="#fff" stroke-width="1.6" fill="none"/>
<path  d="M576.5,557V563M575,562.5H577M575,558.5H577M575.5,563.5L576.5,560.5M577,557.5H579M577,559.5H579M577.5,558V563M578.5,560.5L577.5,563.5M575.5,560V564M575.5,561V564M575.5,561V564M581.5,559V564M580,562.5H582M580,562.5H582M580.5,563.5L581.5,560.5M582.5,559V563M583.5,558V563M583.5,560.5L582.5,563.5M582,559.5H584M585.5,557V562M584,559.5H586M584,559.5H586M584,559.5H586M587.5,557V564M586.5,560V563M587.5,560.5L586.5,563.5M585.5,561V564M589.5,557V564M589,558.5H591M589.5,563.5L590.5,560.5M591,559.5H593M591.5,558V563M590.5,558V561M589,558.5H592M589,558.5H593" stroke="#fff" stroke-width="1.6" fill="none"/>
<path  d="M607.5,559V564M606,560.5H608M606,561.5H608M606,558.5H608M608,561.5H610M609.5,560V561M609.5,559V561M607,560.5H609M611.5,558V562M611,561.5H613M613,563.5H615M613.5,557V564M614.5,559V563M613,563.5H615M613.5,558V563M616.5,557V563M616,558.5H618M618,557.5H620M618,559.5H620M619.5,558V561M617.5,558V561M616,561.5H619" stroke="#fff" stroke-width="1.6" fill="none"/>
<path  d="M633,557.5H637M633.5,557V564M636.5,558V564M634,559.5H636M634,561.5H636M635.5,558V563M633,563.5H637M633.5,557V560M633,562.5H635M634.5,559V564M638.5,558V563M637,559.5H639M637,562.5H639M637.5,563.5L638.5,560.5M639,563.5H641M640.5,560V562M638,559.5H640M638,559.5H641M642.5,557V563M641,561.5H643M641,561.5H643M643,560.5H645M643.5,557V563M644.5,557V563M642.5,559V564M643,560.5H645M642.5,558V563" stroke="#fff" stroke-width="1.6" fill="none"/>
<path  d="M662,557.5H666M664.5,557V561M663,560.5H666M662,561.5H666M662,562.5H665M663.5,561V564M665.5,561V564M664.5,560.5L662.5,563.5M662.5,560V564M667,558.5H671M669.5,557V560M668,559.5H670M668,563.5H670M667,562.5H671M668,560.5H671M667,560.5H671M667.5,560V564M669.5,559.5L667.5,563.5M669.5,560V564M668,558.5H670M667,563.5H669M672.5,558V562M671,561.5H673M671,558.5H673M671,558.5H673M671.5,563.5L672.5,560.5M673,563.5H675M674.5,558V562M672.5,560V564M676,557.5H680M678.5,557V560M677,559.5H679M676,560.5H680M677,563.5H680M677.5,560V564M678.5,559.5L676.5,563.5M678.5,559.5L679.5,563.5M679.5,557V561M678.5,558.5L676.5,561.5M676,560.5H680" stroke="#fff" stroke-width="1.6" fill="none"/>
<path  d="M526.5,573V578M526,576.5H528M526,576.5H528M526,576.5H528M528,576.5H530M528,577.5H530M529.5,572V577M527,577.5H530M530,572.5H534M530.5,572V578M533.5,573V578M531,576.5H533M531,576.5H533M531,575.5H533M532.5,573V577M530.5,575V578" stroke="#fff" stroke-width="1.6" fill="none"/>
<path  d="M526,587.5H530M528.5,587V590M526,589.5H529M526,592.5H530M526,591.5H530M527.5,590V593M529.5,590V593M528.5,589.5L526.5,592.5M528.5,587V592M528.5,589V592M529.5,588.5L527.5,591.5M530,587.5H534M530.5,587V593M533.5,588V593M531,589.5H533M531,589.5H533M532.5,588V592M531,588.5H533M533.5,589V592" stroke="#fff" stroke-width="1.6" fill="none"/>
<path  d="M526,602.5H530M528.5,601V604M526,603.5H530M527,605.5H530M526,604.5H529M527,604.5H529M527.5,604V607M528.5,603.5L526.5,606.5M527,605.5H530M526,604.5H530M530.5,603V607M530,605.5H532M530,602.5H532M532.5,604V607M533.5,604.5L532.5,606.5M530.5,604V607" stroke="#fff" stroke-width="1.6" fill="none"/>
<path  d="M608.5,603V605M608,605.5H610M608.5,606.5L609.5,603.5M610,601.5H612M610,605.5H612M611.5,601V605M611.5,604V607M609.5,602.5L608.5,605.5M611.5,603.5L609.5,606.5M614.5,602V605M613,604.5H615M613,602.5H615M613.5,606.5L614.5,603.5M615,606.5H617M616.5,604V606M615.5,603V605M615,604.5H617M615,601.5H617M613,606.5H616" stroke="#fff" stroke-width="1.6" fill="none"/>
<rect x="721" y="521" width="1" height="10" fill="#fff"/>
<rect x="750" y="521" width="1" height="10" fill="#fff"/>
<path  d="M723.5,521V529M723,522.5H726M723,526.5H726M723,526.5H726M723.5,528.5L725.5,525.5M726,523.5H729M727,525.5H729M726,527.5H729M726.5,521V528M727,522.5H729M725,526.5H727M723.5,526V529M730,521.5H736M733.5,521V526M731,525.5H735M731,527.5H736M731,527.5H735M731.5,526V529M735.5,526V529M733.5,525.5L730.5,528.5M733.5,525.5L735.5,528.5M732,524.5H735M730.5,522.5L730.5,525.5M736,521.5H742M736.5,521V529M741.5,522V529M737,527.5H741M737,526.5H741M738.5,522V528M737,523.5H739M736,528.5H739M743,521.5H749M743.5,521V529M748.5,522V529M744,524.5H748M744,526.5H748M744,525.5H748M744,526.5H748M747.5,522V528M744,524.5H747" stroke="#fff" stroke-width="1.6" fill="none"/>
<path  d="M703,560.5H707M703.5,560V566M706.5,561V566M704,562.5H706M704,562.5H706M704,564.5H706M704,563.5H706M704.5,561V565M703,565.5H707M706.5,563V566M708.5,562V566M708,564.5H710M708.5,565.5L709.5,562.5M710,563.5H712M711.5,561V565M709,562.5H712M708.5,561.5L708.5,564.5M712.5,561V565M712,561.5H714M712,564.5H714M712,564.5H714M715.5,560V565M713.5,560V565M712.5,560.5L712.5,563.5M717,560.5H721M719.5,560V563M717,562.5H721M717,564.5H720M717,564.5H720M718,564.5H720M717.5,563V566M719.5,563V566M719.5,562.5L717.5,565.5M718,564.5H721" stroke="#fff" stroke-width="1.6" fill="none"/>
<path  d="M751.5,561V565M750,563.5H752M750.5,565.5L751.5,562.5M752,560.5H754M752,562.5H754M752,564.5H754M752.5,561V565M752.5,560V564M751.5,563V566M755,560.5H759M757.5,560V564M756,563.5H758M756,564.5H759M755,565.5H758M755,564.5H758M755.5,564V566M758.5,564V566M757.5,563.5L758.5,565.5M758.5,561V564M756,565.5H759" stroke="#fff" stroke-width="1.6" fill="none"/>
<path  d="M777.5,562V566M776,562.5H778M776,564.5H778M776,561.5H778M776.5,565.5L777.5,562.5M778,564.5H780M779.5,563V565M779.5,561V564M779.5,563.5L778.5,565.5M778,560.5H780M782.5,560V564M781,561.5H783M783,560.5H785M784.5,562V565M784.5,560V564M781,560.5H783M782.5,561.5L781.5,564.5M781,560.5H785" stroke="#fff" stroke-width="1.6" fill="none"/>
<path  d="M 776.50,579.50 L 777.50,578.50 L 777.50,584.50 M 780.50,580.50 L 780.50,581.50 M 780.50,583.50 L 780.50,584.50 M 782.50,579.50 L 782.50,578.50 L 782.50,584.50" stroke="#fff" stroke-width="1.0" fill="none" stroke-linejoin="miter" stroke-linecap="square"/>
<path d="M836.5,550 V554.5 M839.5,549 V554.5 M839,552.5 H844 M834,554.5 H845 M835.5,557 V560.5 H843.5 V557 M839.5,557 L837,560 M839.5,557 L842,560" stroke="#fff" stroke-width="1" fill="none" />
<path d="M848.5,549 V561 M846,551.5 H850 M847,554.5 H850 M846,558.5 H850 M853.5,549.5 L850.5,553 M853.5,549.5 L856.5,553.5 M852,556.5 L856,555 M852.5,555 V560.5 H857 M857.5,558 V561" stroke="#fff" stroke-width="1" fill="none" />
<rect x="833" y="588" width="1" height="10" fill="#fff"/>
<rect x="861" y="588" width="1" height="10" fill="#fff"/>
<path  d="M837.5,588V595M835,591.5H838M835,590.5H838M835.5,596.5L837.5,593.5M838,591.5H841M839,593.5H841M838,596.5H841M840.5,588V593M839.5,592V596M837,591.5H841M838.5,590V593M841.5,588V596M841,590.5H844M841,591.5H844M841.5,596.5L843.5,593.5M844,590.5H846M845,594.5H847M845.5,590V596M841.5,593V597M845,592.5H847M850.5,589V596M848,594.5H851M848,590.5H851M848.5,596.5L850.5,593.5M852,592.5H854M852,593.5H854M852,595.5H854M853.5,592V594M852.5,592.5L851.5,596.5M852.5,591.5L850.5,594.5M849.5,592V595M848,593.5H851M854.5,590V596M854,592.5H856M854,593.5H856M856,588.5H860M857,590.5H860M856,594.5H859M857,595.5H859M857,596.5H859M856.5,590V595M856,591.5H860" stroke="#fff" stroke-width="1.6" fill="none"/>
<path  d="M717,601.5H721M719.5,600V605M717,604.5H720M718,606.5H720M718,606.5H720M718.5,605V607M720.5,605V607M719.5,604.5L720.5,606.5M718.5,600V605M719,600.5H721" stroke="#fff" stroke-width="1.6" fill="none"/>
<path  d="M729.5,600V606M728,605.5H730M728.5,606.5L729.5,603.5M730,603.5H732M730,604.5H732M730,606.5H732M732.5,600V605M728.5,603.5L728.5,606.5M728.5,600.5L728.5,603.5" stroke="#fff" stroke-width="1.6" fill="none"/>
<path  d="M740,601.5H744M742.5,600V603M741,602.5H743M741,604.5H744M740,605.5H743M740.5,603V607M742.5,603V607M742,604.5H744" stroke="#fff" stroke-width="1.6" fill="none"/>
<path  d="M751.5,600V606M751,603.5H753M751,601.5H753M751,602.5H753M751.5,606.5L752.5,603.5M753,605.5H756M754.5,602V604M754.5,601V604M754.5,603.5L753.5,606.5M751,600.5H753M753.5,602.5L751.5,605.5M752,601.5H755" stroke="#fff" stroke-width="1.6" fill="none"/>
<path d="M723,598 L721,601 H723 V610 L721,612 H727 L725,610 V597 Z" fill="#fff"/>
<path d="M746,598 L744,601 H746 V610 L744,611 H749 L748,610 V597 Z" fill="#fff"/>
</g>
</svg>
</body></html>
